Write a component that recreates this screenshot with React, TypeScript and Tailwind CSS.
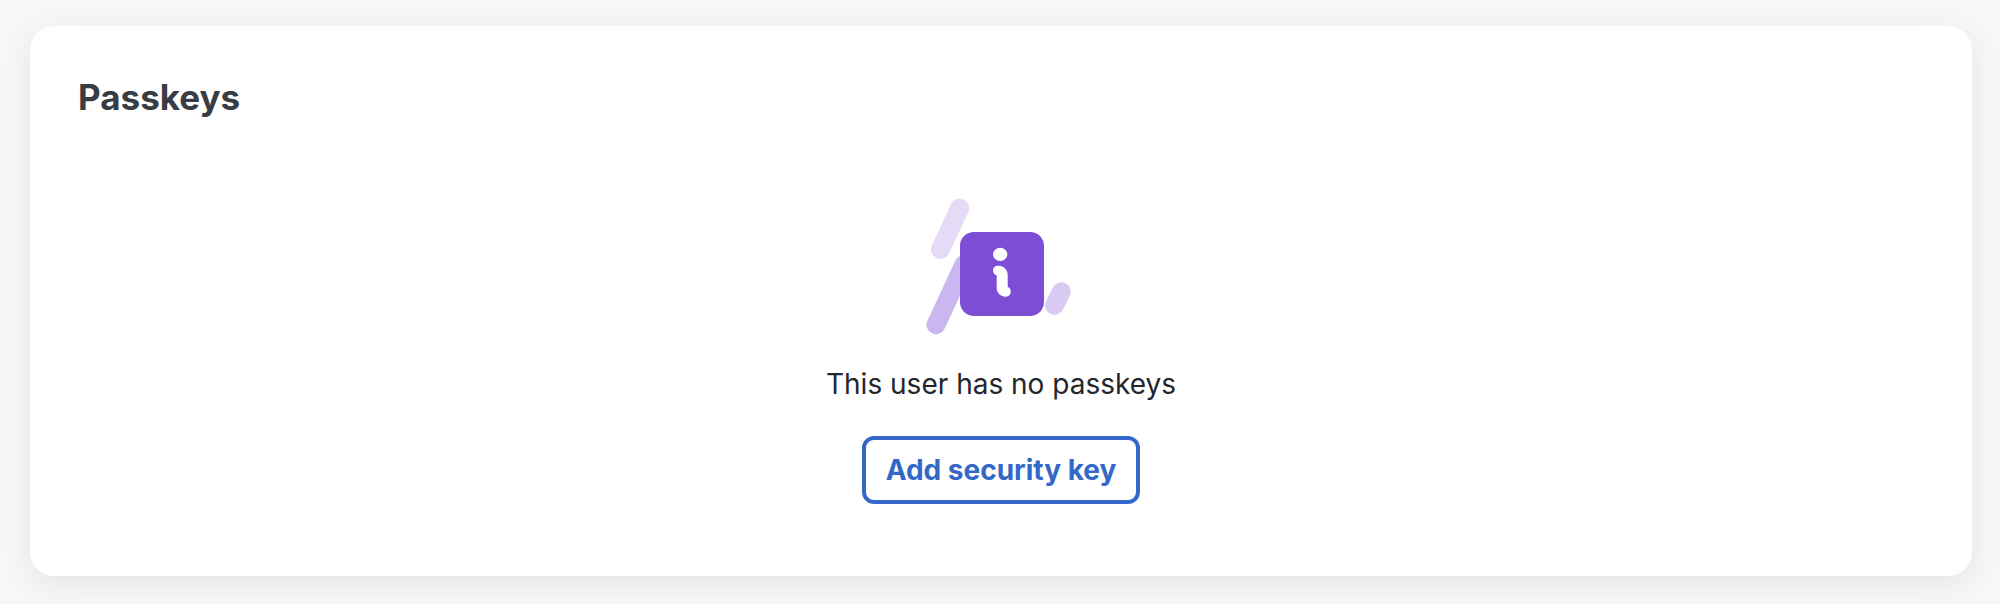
function InfoIllustration() {
  return (
    <svg width="160" height="160" viewBox="0 0 160 160" aria-hidden="true">
      <g strokeWidth="19" strokeLinecap="round">
        <path d="M38.8 18 19.5 59.3" stroke="#e5dbf6" />
        <path d="M43 74.5 15 134.7" stroke="#cbb7ef" />
        <path d="M140.3 101.7 133.5 115.3" stroke="#d9caf3" />
      </g>
      <rect x="39" y="42" width="84" height="84" rx="14" fill="#7e4dd6" />
      <ellipse cx="79.2" cy="64.3" rx="7.2" ry="6.6" fill="#fff" />
      <path
        d="M77 75.7h.7c4.9 0 9 4 9 9v12.3c2 .4 3 2.3 3 4.5 0 3-2 5.2-4.7 5.2h-.5c-4.7 0-8.8-3.9-8.8-8.7V85.2c-2.2-.3-3.7-2.3-3.7-4.7 0-2.7 2.2-4.8 5-4.8Z"
        fill="#fff"
      />
    </svg>
  );
}

export default function App() {
  return (
    <main className="min-h-screen bg-[#f7f7f7] pt-[26px] pr-7 pb-7 pl-[30px] font-['Inter',sans-serif]">
      <section className="flex flex-col rounded-3xl bg-white px-12 pt-12 pb-[72px] shadow-[0_8px_32px_rgba(0,0,0,0.08)]">
        <h2 className="text-[35px] leading-[46px] font-bold text-[#383c43]">
          Passkeys
        </h2>
        <div className="mt-[70px] flex flex-col items-center">
          <InfoIllustration />
          <p className="mt-3.5 text-[28px] leading-10 text-[#23272d]">
            This user has no passkeys
          </p>
          <button
            type="button"
            className="mt-8 rounded-xl border-4 border-[#3468c8] px-5 py-2.5 text-[28px] leading-10 font-bold text-[#3468c8]"
          >
            Add security key
          </button>
        </div>
      </section>
    </main>
  );
}
